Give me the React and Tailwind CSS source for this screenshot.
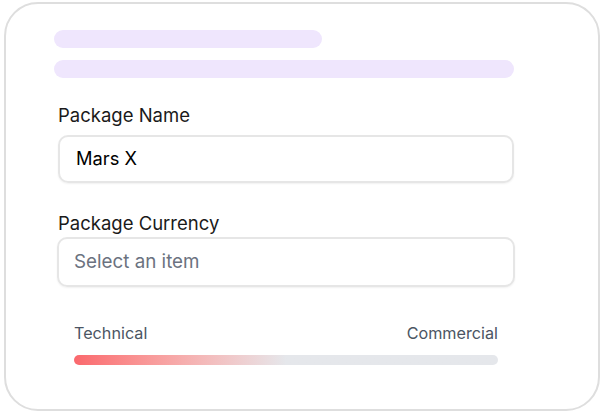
export default function App() {
  return (
    <div className="w-[604px] h-[418px] bg-white pt-[2px] pl-[4px]" style={{ fontFamily: 'Inter, "Noto Sans", sans-serif' }}>
      <div className="w-[596px] h-[409px] border-2 border-[#dedede] rounded-[34px] bg-white pl-[48px] pt-[26px]">
        <div className="w-[268px] h-[18px] rounded-full bg-[#efe6fd]" />
        <div className="w-[460px] h-[18px] rounded-full bg-[#efe6fd] mt-[12px]" />

        <div className="ml-[4px] w-[456px]">
          <div className="mt-[25px] text-[18.5px] leading-[24px] text-[#1a1a1a]">Package Name</div>
          <div className="mt-[8px] h-[48px] rounded-[10px] border-2 border-[#e6e6e6] shadow-[0_1px_2px_rgba(0,0,0,0.06)] flex items-center pl-[16px] text-[18.3px] text-black">
            Mars X
          </div>

          <div className="mt-[28px] text-[18.5px] leading-[24px] text-[#1a1a1a]">Package Currency</div>
          <div className="-ml-[1px] w-[458px] mt-[2px] h-[50px] rounded-[10px] border-2 border-[#e6e6e6] shadow-[0_1px_2px_rgba(0,0,0,0.06)] flex items-center pl-[15px] text-[18.8px] text-[#6b7280]">
            Select an item
          </div>

          <div className="px-[16px] mt-[36px]">
            <div className="flex justify-between text-[16.2px] leading-[20px] text-[#4b5563]">
              <span>Technical</span>
              <span>Commercial</span>
            </div>
            <div className="mt-[12px] h-[10px] rounded-full bg-linear-to-r from-[#fa686d] to-[#e5e7eb] to-50%" />
          </div>
        </div>
      </div>
    </div>
  );
}
